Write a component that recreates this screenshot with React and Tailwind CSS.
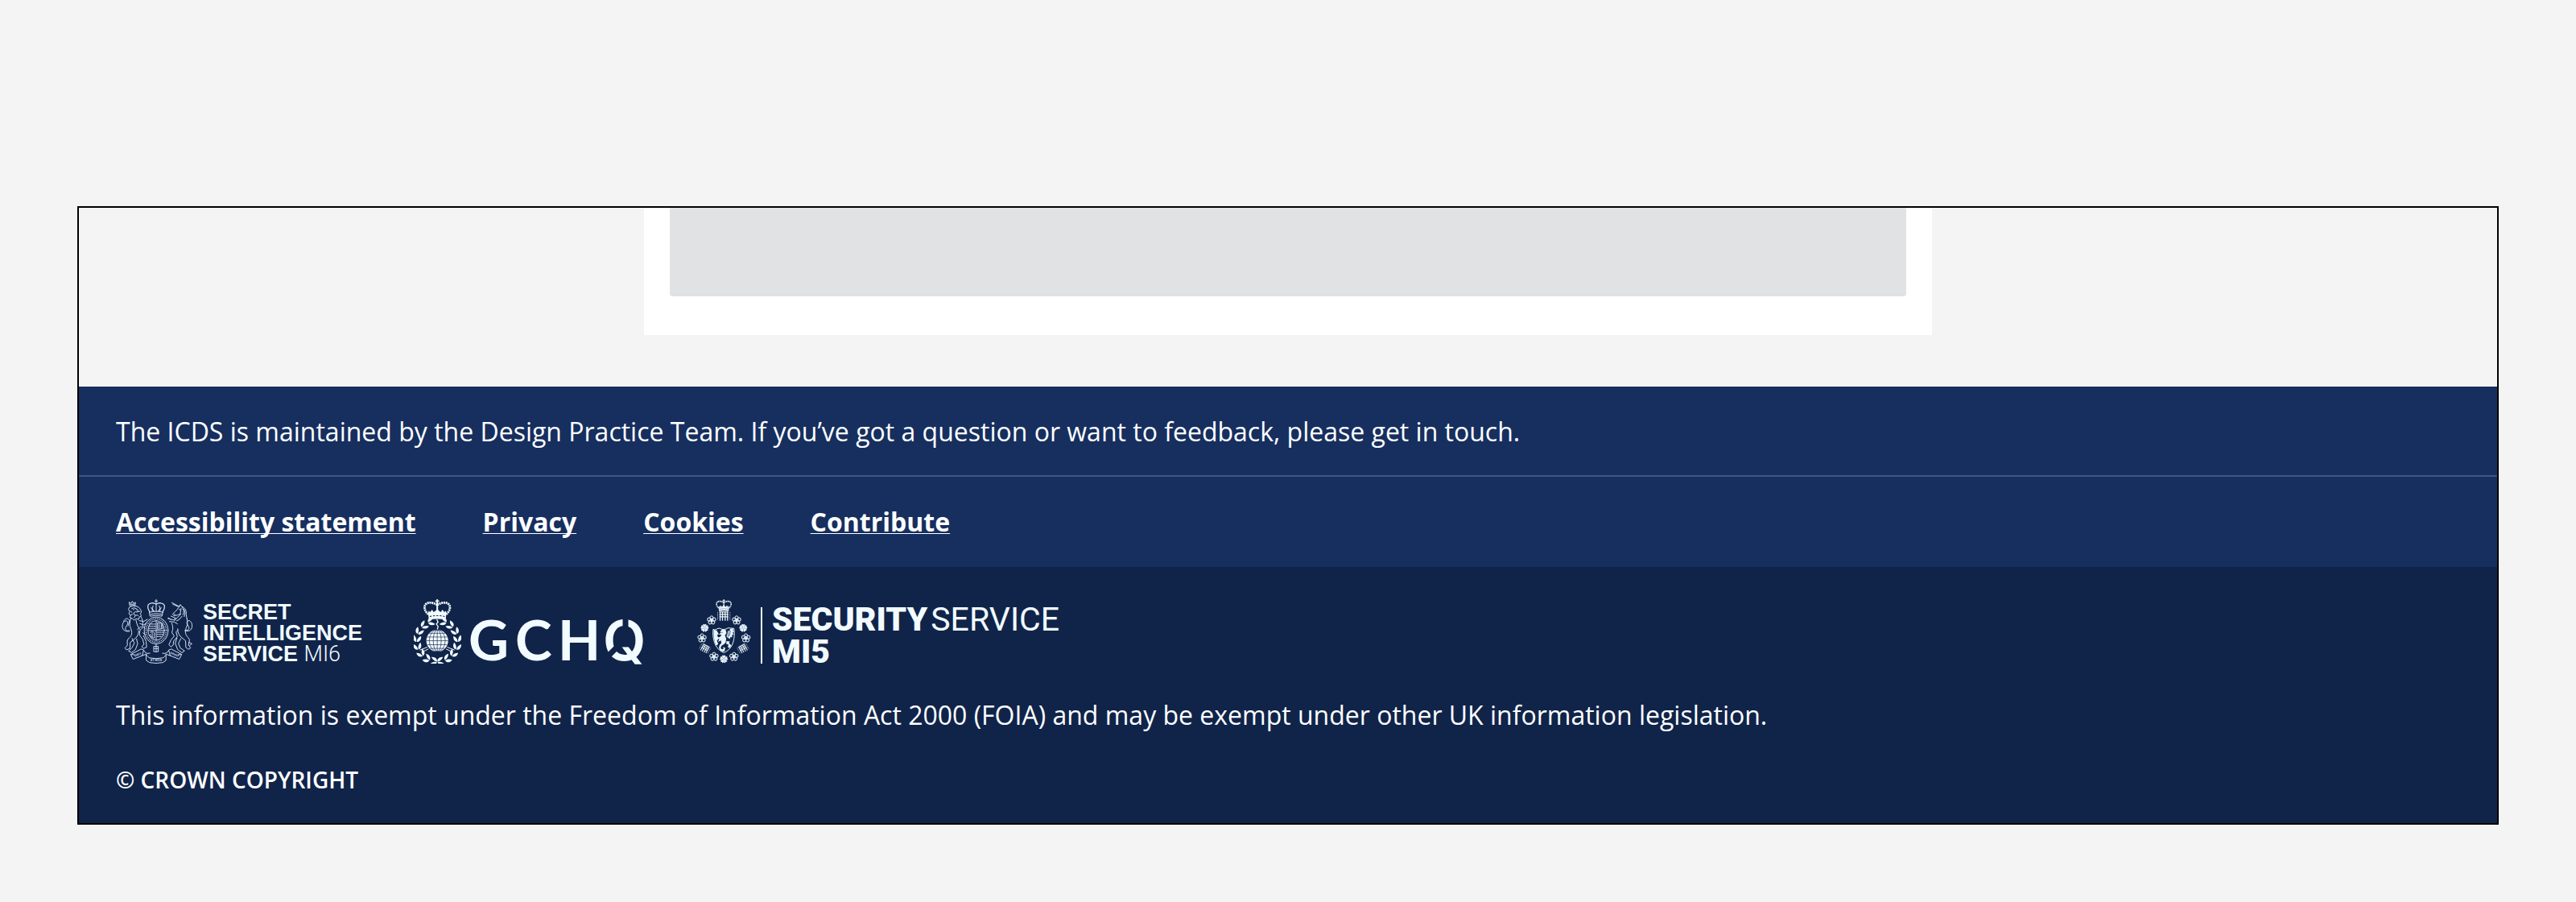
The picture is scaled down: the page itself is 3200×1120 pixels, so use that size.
import React from "react";

const links = ["Accessibility statement", "Privacy", "Cookies", "Contribute"];

function Crown({ x, y, scale }) {
  return (
    <g transform={`translate(${x} ${y}) scale(${scale})`} strokeLinecap="round">
      <path d="M0 -1v13M-5 4h10" fill="none" strokeWidth="5" />
      <circle cy="13" r="4" stroke="none" />
      <path
        d="M0 18C-12 10-30 6-40 14C-52 24-44 42-32 52M0 18C12 10 30 6 40 14C52 24 44 42 32 52"
        fill="none"
        strokeWidth="8"
        strokeDasharray="6 2"
        strokeLinecap="butt"
      />
      <path d="M0 14v38" fill="none" strokeWidth="6" />
      <path d="M-34 50l3-11 6 5 6-9 6 9 7-5 6-8 6 8 7 5 6-9 6 9 6-5 3 11z" stroke="none" />
      <path d="M-33 50q33-8 66 0l-3 22q-30-7-60 0z" stroke="none" />
      <path d="M-27 60q27-7 54 0" fill="none" stroke="#10244a" strokeWidth="3" strokeDasharray="7 5" strokeLinecap="butt" />
    </g>
  );
}

function RoyalArms() {
  return (
    <svg
      className="h-20 w-[90px] shrink-0"
      viewBox="20 27 270 243"
      fill="none"
      stroke="#d3dff3"
      strokeWidth="3"
      strokeLinejoin="round"
      strokeLinecap="round"
      aria-hidden="true"
    >
      {/* crown */}
      <path d="M152 28v14M147 34h10" />
      <path d="M152 46C142 39 126 40 121 50C118 61 124 67 128 76M152 46C162 39 178 40 183 50C186 61 180 67 176 76" strokeWidth="4" />
      <path d="M152 46v28M140 52q-5 12 0 20M164 52q5 12 0 20M133 58l4 8M171 58l-4 8" />
      <path d="M127 76q25-7 50 0l-3 15q-22-6-44 0zM130 84q22-6 44 0M136 71l4-5 4 5M160 71l4-5 4 5" />
      {/* garter and shield */}
      <ellipse cx="152" cy="145" rx="45" ry="51" />
      <ellipse cx="152" cy="145" rx="38" ry="44" strokeWidth="5" strokeLinecap="butt" strokeDasharray="3 4" />
      <ellipse cx="152" cy="145" rx="31" ry="37" />
      <path d="M152 108v74M121 145h62" />
      <path d="M126 121h23M125 129h24M124 137h25M156 152h24M156 160h23M156 168h18" strokeDasharray="6 3" />
      <path d="M158 116l18 2v20l-18 2zM163 121v14M171 121v14M130 152q10-8 15 2v20q-14-1-16-14M137 152v19" />
      {/* lion */}
      <path d="M52 50l-2-12 7 5 5-8 5 8 7-4-2 12zM54 46h17" />
      <path d="M52 56q12-9 27-2q15 6 17 22l-4 7 4 7-8 5-2 8-10-2-8 5-6-7-9-2 2-9-6-6 3-8-4-8z" />
      <path d="M60 62q8-5 16 0l8 7-3 7-7-2-7 5 3 8 8 1M65 66h3M77 66l2 2M55 72l6 5M56 86l7-2M69 96l4-6M85 91l-5-5M90 73l-6 1" />
      <path d="M58 98c-8 14-7 29-1 41c5 14 4 25-7 34l-7 9v20l-9 9 6 7 13-5 1-23 18-14c9-8 15-17 14-30" />
      <path d="M94 92c8 13 9 25 6 36l10 8M76 107c4 17 7 25 15 35M88 108l17 3 14-8M90 119l16 5 9-8" />
      <path d="M82 142c3-9 11-13 20-8c-12 8-15 18-11 31l10 13 5 19-8 9 6 7 12-5-2-22-10-21M102 154l10 8" />
      <path d="M61 175l9 18-10 18-12 12 12 5 14-11 8-22-4-18" />
      <path d="M51 148c-18 3-29-7-26-25c2-13 14-18 19-11c5 9-7 16-8 25c-1 9 9 12 16 8" />
      <path d="M46 128c2-10 8-16 3-24c-5-7-15-4-20 6" />
      {/* unicorn */}
      <path d="M211 40l29 15M215 46l19 9M239 55l4-8 6 8c12 4 18 15 16 29l3 17" />
      <path d="M239 55c-6 6-7 14-16 19l-9 9 5 7 13-3 12-5M239 66h3M220 84h3M250 57q11 14 3 29M257 64q8 14 1 29M246 62l-3 18M245 84l-17 16-8 9M249 92q-8 14-20 17" />
      <path d="M208 91l18 8-8 6-22-5M202 111l18 2 12 7M207 104l-9-7M268 101c4 12 2 24-3 35c-5 14-3 25 7 35l6 9-4 20 8 11-9 5-9-7-1-25-17-14c-8-9-14-18-13-31" />
      <path d="M211 117c5 17 5 24 0 35l9 14-12 15-8 18 8 8 8-7 2-15 14-17-5-17 8-8" />
      <path d="M245 176l-9 18 7 17 16 11-10 7-16-12-9-23 6-20" />
      <path d="M260 146c19 6 30-6 27-24c-2-13-13-18-18-11c-5 10 8 17 7 26c-1 7-8 9-14 6M275 190l12 5-8 6" />
      {/* pendant and motto ribbon */}
      <path d="M152 196v9M144 205h16v20h-16zM152 205v20M144 213h16" />
      <path d="M57 235l38-20 10 4-6 21-33 13zM105 220q6 15 23 11M57 235l13 2M99 240l17-6M247 235l-38-20-10 4 6 21 33 13zM199 220q-6 15-23 11M247 235l-13 2M205 240l-17-6" />
      <path d="M115 237l10 11q27 6 54 0l10-11v21l-12 8q-25 5-50 0l-12-8z" />
      <g fill="#d3dff3" stroke="none" fontFamily="Liberation Sans" fontWeight="700" fontSize="11" textAnchor="middle">
        <text transform="translate(84 239) rotate(-25)">DIEU</text>
        <text x="152" y="262">ET MON</text>
        <text transform="translate(220 239) rotate(25)">DROIT</text>
      </g>
    </svg>
  );
}

const leafAngles = [16, 38, 60, 82, 104, 126, 148, 169];

function GchqCrest() {
  return (
    <svg className="h-20 w-[59px] shrink-0" viewBox="27 27 176 242" fill="#f2fbff" stroke="#f2fbff" aria-hidden="true">
      <Crown x={114} y={30} scale={1.04} />
      {[1, -1].map((side) => (
        <g key={side} transform={`translate(114 184) scale(${side} 1)`}>
          {leafAngles.map((a) => (
            <g key={a} transform={`rotate(${a}) translate(0 -77)`} stroke="none">
              <path d="M14 -1C5 0-4 -4-10 -13C3 -18 14 -11 14 -1z" />
              <path d="M14 1C5 0-4 5-10 14C3 18 14 11 14 1z" />
            </g>
          ))}
          <path d="M37 23L65 34M33 30L58 42" fill="none" strokeWidth="3" />
        </g>
      ))}
      <path d="M112 103l5 9-6 9 6 8-3 15" fill="none" strokeWidth="4" />
      <circle cx="114" cy="183" r="41" stroke="none" />
      <g fill="none" stroke="#10244a" strokeWidth="2">
        <path d="M114 142v82M73 183h82M76 169h76M77 198h74M84 155h60M86 212h56" />
        <ellipse cx="114" cy="183" rx="15" ry="41" />
        <ellipse cx="114" cy="183" rx="30" ry="41" />
      </g>
    </svg>
  );
}

function GchqName() {
  return (
    <svg className="h-[60px] w-[218px] shrink-0 overflow-visible" viewBox="0 0 218 60" role="img" aria-label="GCHQ">
      <g fill="#f2fbff" fontFamily="Lato" fontWeight="700" fontSize="69">
        <text x="-2" y="56">G</text>
        <text x="56" y="56">C</text>
        <text x="109" y="56">H</text>
        <text x="165" y="56" fontFamily="Inter" fontSize="69" fontWeight="600">Q</text>
      </g>
      <path d="M193 3v15M182 40l-14 14" stroke="#10244a" strokeWidth="7" />
    </svg>
  );
}

const petals = [0, 72, 144, 216, 288];

function Rose({ x, y }) {
  return (
    <g transform={`translate(${x} ${y})`}>
      {petals.map((a) => (
        <g key={a} transform={`rotate(${a})`}>
          <circle cy="-10" r="6" fill="none" strokeWidth="3" />
          <path d="M0 -4v-5" strokeWidth="2" />
        </g>
      ))}
      <circle r="4" stroke="none" />
    </g>
  );
}

function Cinquefoil({ x, y }) {
  return (
    <g transform={`translate(${x} ${y})`} stroke="none">
      {petals.map((a) => (
        <path key={a} transform={`rotate(${a})`} d="M-1 -2L-7 -10L-5 -15L0 -13L5 -15L7 -10L1 -2z" />
      ))}
      <circle r="3" />
    </g>
  );
}

function Portcullis({ x, y, angle, scale }) {
  return (
    <g transform={`translate(${x} ${y}) rotate(${angle}) scale(${scale})`} fill="none" strokeWidth="4">
      <path d="M-17 -15h34M-17 -6h34M-17 3h34M-14 -15v33M-5 -15v33M5 -15v33M14 -15v33" />
      <path d="M-23 -15v31M23 -15v31" strokeWidth="2" strokeDasharray="4 2" />
    </g>
  );
}

function Mi5Crest() {
  return (
    <svg className="h-20 w-[67px] shrink-0" viewBox="32 27 202 242" fill="#e9f5fd" stroke="#e9f5fd" aria-hidden="true">
      <Crown x={132} y={29} scale={0.6} />
      <Portcullis x={132} y={90} angle={0} scale={1} />
      <Rose x={86} y={106} />
      <Rose x={180} y={106} />
      <Cinquefoil x={60} y={135} />
      <Cinquefoil x={205} y={135} />
      <Rose x={50} y={173} />
      <Rose x={215} y={173} />
      <Portcullis x={61} y={212} angle={28} scale={0.8} />
      <Portcullis x={204} y={212} angle={-28} scale={0.8} />
      <Rose x={95} y={243} />
      <Rose x={170} y={243} />
      <Cinquefoil x={132} y={252} />
      <path
        d="M92 140C98 143 104 142 107 138L116 136Q132 146 148 135L170 137C174 165 172 212 132 228C94 213 89 168 92 140z"
        fill="none"
        strokeWidth="3"
      />
      <path d="M94 141l11 3 8 14-7 5 8 11-8 9 5 13-8 6C94 180 93 158 94 141z" stroke="none" />
      <path
        d="M118 148l10-9 11 4 3 10-6 11 5 11-2 14c-5 9-14 9-18 17c-2 8 5 12 10 7l-2-7 8 4-2 12q-9 4-17-3c-7-9-4-20 5-27l-2-10-11 5 5-10-8-5 10-3 7-8-11-2 8-6z"
        stroke="none"
      />
      <path d="M142 168l6-23 5 4 2-9 14-5-3 9 5 3-6 6 4 6-7 3 2 7-8 1-1 7zM142 184l13 2-4 6 9 8-6 11-7-4 3-9-9-3z" stroke="none" />
      <path d="M150 150l-3 18M157 146l-5 21M122 151l5 2" stroke="#10244a" strokeWidth="2" />
    </svg>
  );
}

function Logos() {
  return (
    <div className="ml-1.5 flex h-20 items-center gap-16 text-[#f2fbff]">
      <div className="flex items-center gap-3">
        <RoyalArms />
        <p className="pt-1 font-['Liberation_Sans',sans-serif] text-[27px] leading-[26px] font-bold">
          SECRET
          <br />
          INTELLIGENCE
          <br />
          SERVICE <span className="font-['Roboto',sans-serif] font-light">MI6</span>
        </p>
      </div>
      <div className="flex items-end gap-[11px]">
        <GchqCrest />
        <GchqName />
      </div>
      <div className="flex items-center gap-3">
        <Mi5Crest />
        <div className="flex h-[70px] items-center self-end border-l-2 border-[#f2fbff] pl-3 font-['Roboto',sans-serif] text-[41px] leading-10">
          <div>
            <p className="flex gap-1">
              <span className="font-black">SECURITY</span>
              <span>SERVICE</span>
            </p>
            <p className="font-black">MI5</p>
          </div>
        </div>
      </div>
    </div>
  );
}

export default function App() {
  return (
    <div className="min-h-screen bg-[#f4f4f4] px-24 pt-64 pb-24 font-['Open_Sans',sans-serif] text-[32px] leading-[48px] text-white">
      <div className="border-2 border-black">
        <main className="px-[22%] pb-16">
          <div className="mx-auto max-w-[1600px] bg-white px-8 pb-12">
            <div className="h-[110px] rounded-b bg-[#e1e2e4]" />
          </div>
        </main>
        <footer>
          <div className="bg-[#162f5f]">
            <p className="border-b-2 border-[#3c5683] px-[46px] pt-8 pb-[30px]">
              The ICDS is maintained by the Design Practice Team. If you’ve got a question or want to feedback, please get in touch.
            </p>
            <nav className="flex flex-wrap gap-x-[83px] px-[46px] py-8 font-bold">
              {links.map((label) => (
                <a key={label} href="#" className="underline decoration-1 underline-offset-2 [text-decoration-skip-ink:none]">
                  {label}
                </a>
              ))}
            </nav>
          </div>
          <div className="bg-[#10244a] px-[46px] pt-10 pb-[30px]">
            <Logos />
            <p className="mt-10">
              This information is exempt under the Freedom of Information Act 2000 (FOIA) and may be exempt under other UK information
              legislation.
            </p>
            <p className="mt-8 text-[28px] font-semibold">© CROWN COPYRIGHT</p>
          </div>
        </footer>
      </div>
    </div>
  );
}
